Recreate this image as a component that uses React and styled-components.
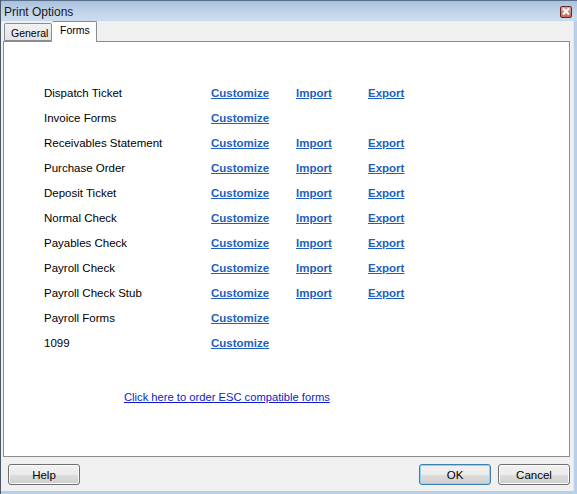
import React from "react";
import styled, { createGlobalStyle } from "styled-components";

const Global = createGlobalStyle`
  html, body { margin: 0; padding: 0; background: #f0f0f0; }
  #root { width: 577px; height: 494px; }
`;

const Window = styled.div`
  width: 577px;
  height: 494px;
  box-sizing: border-box;
  display: flex;
  flex-direction: column;
  background: #f0f0f0;
  border-left: 1px solid #4d5866;
  font-family: "Liberation Sans", Arial, sans-serif;
  overflow: hidden;
`;

const TitleBar = styled.div`
  height: 21px;
  flex: none;
  display: flex;
  align-items: center;
  justify-content: space-between;
  padding: 0 5px 0 3px;
  box-sizing: border-box;
  background: linear-gradient(#a9c1de, #c2d4ea 60%, #cddcee);
  border-top: 1px solid #5a6f88;
  border-bottom: 1px solid #c8d8ea;
`;

const Title = styled.span`
  font-size: 12px;
  color: #1a1a1a;
  padding-top: 2px;
`;

const CloseBtn = styled.div`
  width: 12px;
  height: 12px;
  margin-top: 2px;
  border: 1px solid #5e2a28;
  border-radius: 2px;
  background: linear-gradient(#e2a39a, #c76a5e);
  display: flex;
  align-items: center;
  justify-content: center;
  box-sizing: border-box;
`;

const Body = styled.div`
  flex: 1;
  display: flex;
  flex-direction: column;
  padding: 0 4px 0 2px;
  border-right: 3px solid #b7cfe9;
  border-bottom: 3px solid #b7cfe9;
  box-shadow: inset -1px 0 0 #dde9f5;
`;

const TabStrip = styled.div`
  height: 20px;
  display: flex;
  align-items: flex-end;
  padding-left: 1px;
  position: relative;
  z-index: 1;
`;

const Tab = styled.div`
  box-sizing: border-box;
  height: ${p => (p.$active ? "21px" : "18px")};
  margin-bottom: ${p => (p.$active ? "-1px" : "0")};
  padding: ${p => (p.$active ? "2px 0 0 8px" : "3px 0 0 6px")};
  width: ${p => (p.$active ? "45px" : "48px")};
  font-size: 10.5px;
  color: #000;
  border: 1px solid #898c95;
  border-bottom: ${p => (p.$active ? "none" : "1px solid #898c95")};
  border-left: ${p => (p.$active ? "none" : "1px solid #898c95")};
  background: ${p => (p.$active ? "#fff" : "linear-gradient(#f2f2f2, #e3e3e3)")};
  border-radius: 2px 2px 0 0;
  white-space: nowrap;
`;

const Panel = styled.div`
  height: 416px;
  box-sizing: border-box;
  background: #fff;
  border: 1px solid #898c95;
  padding: 38px 0 0 40px;
  display: flex;
  flex-direction: column;
`;

const Row = styled.div`
  height: 25px;
  display: grid;
  grid-template-columns: 167px 85px 72px auto;
  align-items: center;
  font-size: 11.5px;
`;

const Label = styled.span`
  color: #000;
`;

const ActionLink = styled.a`
  color: #1d5fbf;
  font-weight: bold;
  text-decoration: underline;
  cursor: pointer;
`;

const OrderLink = styled.a`
  margin: 36px 0 0 80px;
  font-size: 11.2px;
  color: #0b1ccc;
  text-decoration: underline;
  cursor: pointer;
  align-self: flex-start;
`;

const ButtonBar = styled.div`
  display: flex;
  align-items: center;
  padding: 7px 0 0 5px;
  gap: 7px;
`;

const Spacer = styled.div`
  flex: 1;
`;

const Button = styled.div`
  width: 72px;
  height: 21px;
  box-sizing: border-box;
  display: flex;
  align-items: center;
  justify-content: center;
  font-size: 11.5px;
  color: #000;
  border-radius: 3px;
  border: 1px solid ${p => (p.$default ? "#3c7fb1" : "#707070")};
  background: linear-gradient(#f2f2f2 0%, #ebebeb 50%, #dddddd 51%, #cfcfcf 100%);
  box-shadow: inset 0 0 0 1px ${p => (p.$default ? "#8fd3f7" : "#fbfbfb")};
`;

const forms = [
  ["Dispatch Ticket", true],
  ["Invoice Forms", false],
  ["Receivables Statement", true],
  ["Purchase Order", true],
  ["Deposit Ticket", true],
  ["Normal Check", true],
  ["Payables Check", true],
  ["Payroll Check", true],
  ["Payroll Check Stub", true],
  ["Payroll Forms", false],
  ["1099", false],
];

export default function App() {
  return (
    <>
      <Global />
      <Window>
        <TitleBar>
          <Title>Print Options</Title>
          <CloseBtn>
            <svg width="8" height="7" viewBox="0 0 8 7">
              <path d="M1 0.5 L7 6.5 M7 0.5 L1 6.5" stroke="#fff" strokeWidth="2" />
            </svg>
          </CloseBtn>
        </TitleBar>
        <Body>
          <TabStrip>
            <Tab>General</Tab>
            <Tab $active>Forms</Tab>
          </TabStrip>
          <Panel>
            {forms.map(([name, io]) => (
              <Row key={name}>
                <Label>{name}</Label>
                <ActionLink>Customize</ActionLink>
                {io ? <ActionLink>Import</ActionLink> : <span />}
                {io ? <ActionLink>Export</ActionLink> : <span />}
              </Row>
            ))}
            <OrderLink>Click here to order ESC compatible forms</OrderLink>
          </Panel>
          <ButtonBar>
            <Button>Help</Button>
            <Spacer />
            <Button $default>OK</Button>
            <Button>Cancel</Button>
          </ButtonBar>
        </Body>
      </Window>
    </>
  );
}
